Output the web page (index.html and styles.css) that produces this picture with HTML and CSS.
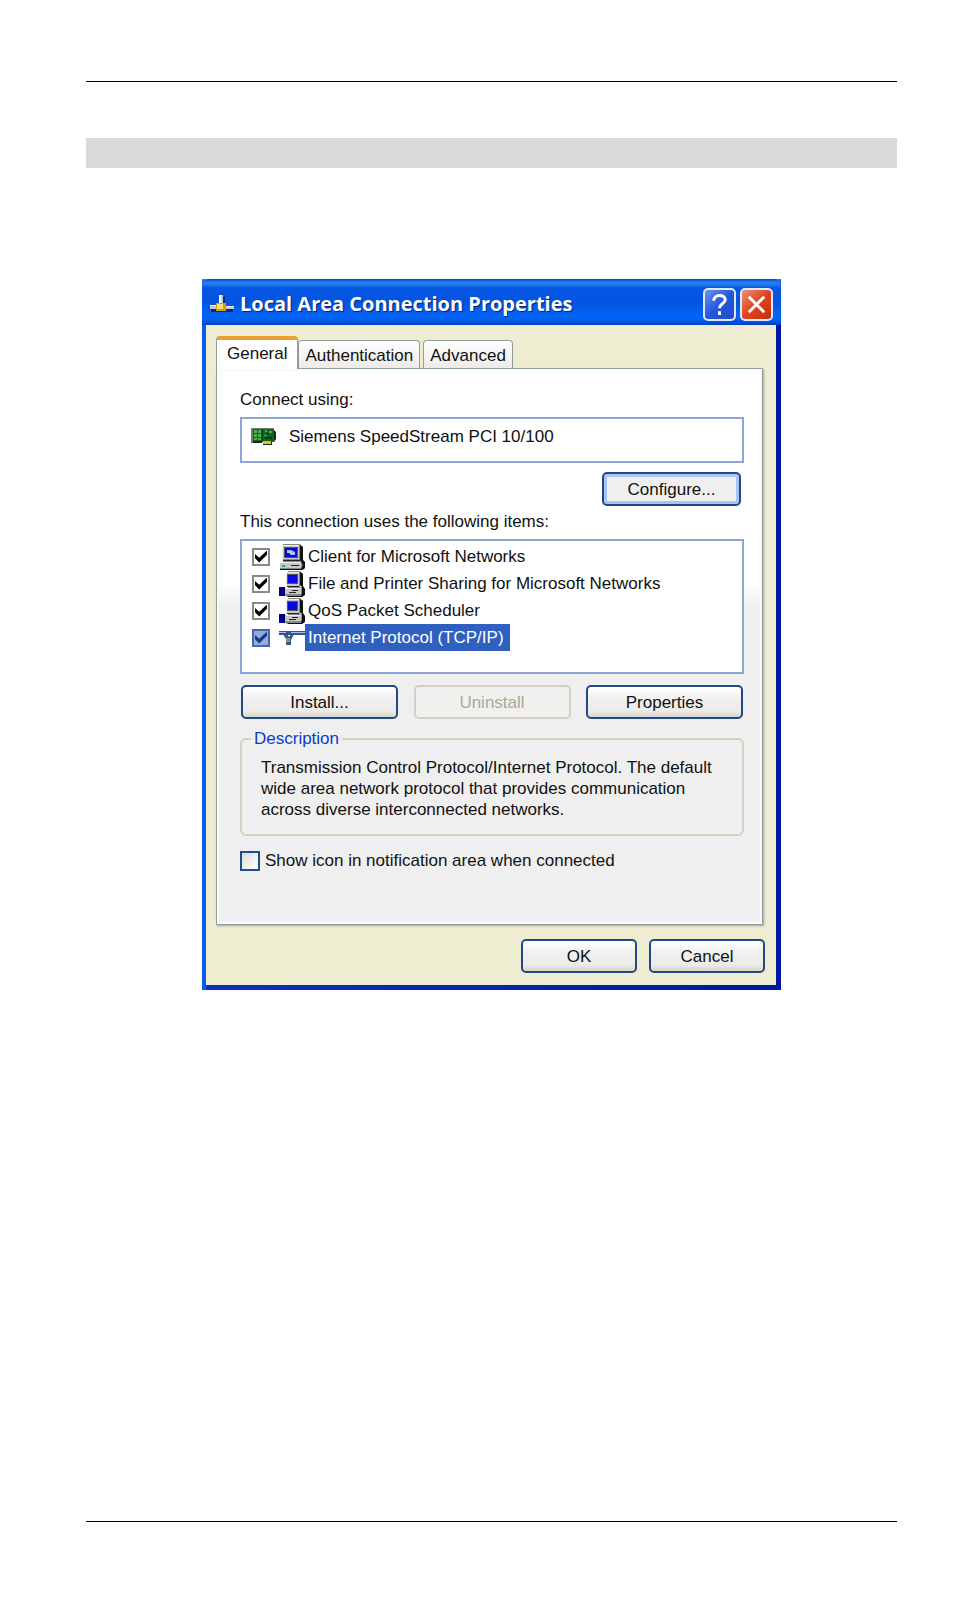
FILE: index.html
```html
<!DOCTYPE html>
<html lang="en">

<head>
    <meta charset="UTF-8">
    <meta name="viewport" content="width=device-width, initial-scale=1.0">
    <title>Local Area Connection Properties</title>
    <link rel="stylesheet" href="styles.css">
</head>

<body>
    <!-- icons used more than once -->
    <svg class="sprite" aria-hidden="true">
        <symbol id="icon-service" viewBox="0 0 26 26">
            <path fill="#888" d="M9 0h12l3 3v12h-3v1h4v8l-2 2H8l-2-2v-7h3z" />
            <path fill="#111" d="M21 1l3 2v12l2 3v6l-3 2H9v-1h13l1-3v-6l-2-2z" />
            <path fill="#c8c8c8" d="M7 1h13v14H7zM6 17h16v6H6z" />
            <path fill="#eee" d="M7 1h13v1H7zM7 1h1v14H7zM7 17h15v1H7z" />
            <path fill="#555" d="M8 3h11v10H8z" />
            <path fill="#0808e0" d="M9 4h9v8H9z" />
            <path fill="#222" d="M8 15h12v1H8zM13 19h6v1h-6zM10 21h7v1h-7z" />
            <path fill="#0000a8" d="M0 16h6v9H0z" />
            <path fill="#000040" d="M0 18h1l1 2-2 2zM4 16h2v9H4v-2h1z" />
        </symbol>
    </svg>

    <header class="page-header"></header>
    <div class="page-bar"></div>

    <main class="dialog">
        <div class="title-bar">
            <svg class="title-icon" viewBox="0 0 26 20" aria-hidden="true">
                <path fill="#102a70" d="M2 15h22v3H2zM13 3h3v9h-3z" />
                <path fill="#c9c9c9" d="M10 1h4v9h-4zM1 11h7v4H1zM17 12h8v3h-8z" />
                <path fill="#fff" d="M10 1h2v8h-2zM1 11h7v1H1zM18 12h6v1h-6z" />
                <path fill="#d69b1c" d="M7 9h10v8H7z" />
                <path fill="#f8dc72" d="M8 10h6v5H8z" />
            </svg>
            <h1>Local Area Connection Properties</h1>
            <button class="title-button" aria-label="Help">
                <svg viewBox="0 0 28 28" aria-hidden="true">
                    <path d="M8 10c0-7 12-7 12-1 0 4-6 4-6 9M14 21v4" />
                </svg>
            </button>
            <button class="title-button close" aria-label="Close">
                <svg viewBox="0 0 28 28" aria-hidden="true">
                    <path d="M6 6l16 16M22 6L6 22" />
                </svg>
            </button>
        </div>

        <div class="body">
            <div class="tabs" role="tablist">
                <button class="tab active" role="tab" aria-selected="true">General</button>
                <button class="tab" role="tab">Authentication</button>
                <button class="tab" role="tab">Advanced</button>
            </div>

            <div class="panel">
                <p class="label">Connect using:</p>
                <div class="adapter">
                    <svg class="adapter-icon" viewBox="0 0 26 18" aria-hidden="true">
                        <path fill="#777" d="M0 0h2v15H0zM2 0h21v1H2z" />
                        <path fill="#0c6a20" d="M2 1h21v13H2z" />
                        <path fill="#222" d="M23 2l2 2v7l-2 3zM2 13h9v2H2z" />
                        <path fill="#4fb050" d="M3 2h3v3H3zM7 2h3v3H7zM3 6h3v3H3zM7 6h3v3H7zM3 10h3v2H3zM7 10h3v2H7zM14 2h2v2h-2zM18 3h3v2h-3zM13 7h3v1h-3z" />
                        <path fill="#063c10" d="M11 1h1v13h-1zM14 9h7v2h-7zM16 4h1v3h-1z" />
                        <path fill="#d5c520" d="M12 13h8v3h-8z" />
                        <path fill="#222" d="M12 16h9v1h-9zM20 13h1v3h-1z" />
                    </svg>
                    <span>Siemens SpeedStream PCI 10/100</span>
                </div>
                <div class="configure">
                    <button class="button focused">Configure...</button>
                </div>

                <p class="label">This connection uses the following items:</p>
                <ul class="items">
                    <li>
                        <input type="checkbox" id="client" checked>
                        <svg class="item-icon" viewBox="0 0 26 26" aria-hidden="true">
                            <path fill="#888" d="M4 0h17l3 3v13l2 3v5l-2 2H1v-8h3z" />
                            <path fill="#111" d="M21 1l3 2v13l2 2v6l-3 2H1v-1h21l2-4-3-5z" />
                            <path fill="#c8c8c8" d="M3 2h17v13H3zM1 18h21v6H1z" />
                            <path fill="#eee" d="M3 1h17v1H3zM3 2h1v13H3zM1 18h21v1H1z" />
                            <path fill="#555" d="M5 3h14v11H5z" />
                            <path fill="#0808d8" d="M6 4h12v9H6z" />
                            <path fill="#aac4f4" d="M8 6h4l4 2v3h-4l-2-2H8z" />
                            <path fill="#222" d="M4 16h17v1H4zM12 21h8v1h-8z" />
                            <path fill="#20c040" d="M3 21h3v2H3z" />
                        </svg>
                        <label for="client">Client for Microsoft Networks</label>
                    </li>
                    <li>
                        <input type="checkbox" id="sharing" checked>
                        <svg class="item-icon" aria-hidden="true"><use href="#icon-service" /></svg>
                        <label for="sharing">File and Printer Sharing for Microsoft Networks</label>
                    </li>
                    <li>
                        <input type="checkbox" id="qos" checked>
                        <svg class="item-icon" aria-hidden="true"><use href="#icon-service" /></svg>
                        <label for="qos">QoS Packet Scheduler</label>
                    </li>
                    <li class="selected">
                        <input type="checkbox" id="tcpip" checked>
                        <svg class="item-icon" viewBox="0 0 26 26" aria-hidden="true">
                            <path fill="#35548c" d="M0 6h26v4H0z" />
                            <path fill="#a9bfe8" d="M0 7h7v1H0zM12 7h14v1H12z" />
                            <path fill="#35548c" d="M4 9h4l2 3 2-3h3l-3 6v5H7v-6z" />
                            <path fill="#7f9e78" d="M7 13h4v4H7z" />
                        </svg>
                        <label for="tcpip">Internet Protocol (TCP/IP)</label>
                    </li>
                </ul>

                <div class="actions">
                    <button class="button">Install...</button>
                    <button class="button" disabled>Uninstall</button>
                    <button class="button">Properties</button>
                </div>

                <fieldset class="description">
                    <legend>Description</legend>
                    <p>Transmission Control Protocol/Internet Protocol. The default<br>
                        wide area network protocol that provides communication<br>
                        across diverse interconnected networks.</p>
                </fieldset>

                <div class="notify">
                    <input type="checkbox" id="notify">
                    <label for="notify">Show icon in notification area when connected</label>
                </div>
            </div>

            <div class="footer">
                <button class="button">OK</button>
                <button class="button">Cancel</button>
            </div>
        </div>
    </main>

    <footer class="page-footer"></footer>
</body>

</html>
```

FILE: styles.css
```css
* {
    box-sizing: border-box;
}

body {
    display: flex;
    flex-direction: column;
    min-height: 100vh;
    margin: 0;
    padding: 81px 57px 85px 86px;
    font-family: "Liberation Sans", sans-serif;
    font-size: 17px;
    line-height: 21px;
    color: #111;
    background-color: #fff;
}

h1,
p,
ul {
    margin: 0;
    padding: 0;
}

button {
    font: inherit;
    color: inherit;
}

.sprite {
    position: absolute;
    width: 0;
    height: 0;
}

.page-header,
.page-footer {
    border-top: 1px solid #000;
}

.page-bar {
    height: 30px;
    margin: 56px 0 111px;
    background-color: #d9d9d9;
}

.page-footer {
    margin-top: auto;
}

/* 窗口 */
.dialog {
    width: 100%;
    max-width: 579px;
    margin: 0 auto;
    padding: 0 5px 5px 4px;
    background: linear-gradient(#4a68e4, transparent 10px), linear-gradient(to right, #0a5cf0 4px, #0a30c0 5px, #0018a0);
}

.title-bar {
    display: flex;
    align-items: center;
    gap: 4px;
    height: 46px;
    margin: 0 -5px 0 -4px;
    padding: 4px 8px 0 7px;
    border-radius: 8px 8px 0 0;
    background: linear-gradient(#0048c8, #2a86fa 4px, #0456e4 9px, #0454e0 24px, #0462f4 34px, #0462f4 40px, #0040c4);
}

.title-icon {
    width: 26px;
    height: 20px;
    margin-right: 1px;
}

.title-bar h1 {
    flex: 1;
    font-family: "Open Sans", "Noto Sans", sans-serif;
    font-size: 20px;
    line-height: 24px;
    font-weight: bold;
    color: #fff;
    text-shadow: 1px 1px 1px #06207a;
}

.title-button {
    width: 33px;
    height: 33px;
    padding: 1px;
    border: 2px solid #dfe9fb;
    border-radius: 5px;
    background: linear-gradient(135deg, #6a94f4, #2458dc 50%, #1c4cc8);
}

.title-button.close {
    background: linear-gradient(135deg, #f09074, #dc4420 50%, #c03008);
}

.title-button svg {
    display: block;
    width: 100%;
    fill: none;
    stroke: #fff;
    stroke-width: 3;
}

.body {
    padding: 11px 13px 12px 10px;
    background-color: #efedd1;
}

/* 标签页 */
.tabs {
    display: flex;
    align-items: flex-end;
    gap: 3px;
}

.tab {
    height: 28px;
    padding: 2px 6px 0;
    border: 1px solid #919b9c;
    border-bottom: 0;
    border-radius: 4px 4px 0 0;
    background: linear-gradient(#fff, #ecebe8);
}

.tab.active {
    height: 33px;
    margin-right: -3px;
    /* 盖住面板的上边框 */
    margin-bottom: -1px;
    padding: 0 10px 3px;
    border-top: 4px solid #e8a030;
    background: #fff;
    z-index: 1;
}

.panel {
    padding: 20px 18px 53px 23px;
    border: 1px solid #8fa0a4;
    background: linear-gradient(#fff 215px, #efefef 240px);
    box-shadow: 1px 1px 2px rgba(0, 0, 0, .3), inset 0 0 0 2px #fafafa;
}

.label {
    margin-bottom: 7px;
}

.adapter {
    display: flex;
    gap: 12px;
    height: 46px;
    padding: 7px 9px;
    border: 2px solid #8fa5d6;
    background-color: #fff;
}

.adapter-icon {
    width: 26px;
    height: 18px;
    margin-top: 2px;
}

.configure {
    display: flex;
    justify-content: flex-end;
    padding: 9px 3px 5px;
}

.button {
    height: 34px;
    min-width: 116px;
    padding: 0 8px;
    border: 2px solid #1f4a86;
    border-radius: 5px;
    background: linear-gradient(#fff, #f0f0ef 40%, #ecebe8 80%, #d8d4cc);
}

.button.focused {
    min-width: 139px;
    background: #efefef;
    box-shadow: inset 0 0 0 3px #a9c3f2;
}

.button:disabled {
    border-color: #d8ccc6;
    color: #a9a997;
    background: #f0f0ef;
}

.items {
    height: 135px;
    padding: 2px 10px;
    border: 2px solid #8fa5d6;
    background-color: #fff;
    list-style: none;
}

.items li {
    display: flex;
    align-items: center;
    height: 27px;
}

.items label {
    padding: 3px;
}

.item-icon {
    width: 26px;
    height: 26px;
    margin-left: 9px;
}

.selected label {
    padding-right: 6px;
    color: #fff;
    background-color: #2f60c0;
}

/* 复选框 */
input[type="checkbox"] {
    appearance: none;
    display: grid;
    place-items: center;
    width: 18px;
    height: 18px;
    margin: 0;
    border: 2px solid #8a8a8a;
    background-color: #fff;
}

input[type="checkbox"]:checked::before {
    content: '';
    width: 12px;
    height: 12px;
    background-color: #000;
    clip-path: polygon(0 30%, 35% 60%, 100% 0, 100% 35%, 35% 100%, 0 65%);
}

.selected input[type="checkbox"] {
    border-color: #4668a8;
    background-color: #94acdc;
}

.selected input[type="checkbox"]:checked::before {
    background-color: #183c80;
}

.actions {
    display: flex;
    justify-content: space-between;
    padding: 11px 1px 9px;
}

.actions .button {
    width: 157px;
}

.description {
    height: 108px;
    margin: 0;
    padding: 8px 19px;
    border: 2px solid #d3d2c0;
    border-radius: 6px;
}

.description legend {
    margin-left: -10px;
    padding: 0 3px;
    color: #0a3cd0;
}

.notify {
    display: flex;
    align-items: center;
    gap: 5px;
    margin-top: 14px;
}

.notify input[type="checkbox"] {
    width: 20px;
    height: 20px;
    border-color: #1f4f86;
    background: linear-gradient(135deg, #dcdcd8, #fff);
}

.footer {
    display: flex;
    justify-content: flex-end;
    gap: 12px;
    margin-top: 14px;
    margin-right: -2px;
}
```
